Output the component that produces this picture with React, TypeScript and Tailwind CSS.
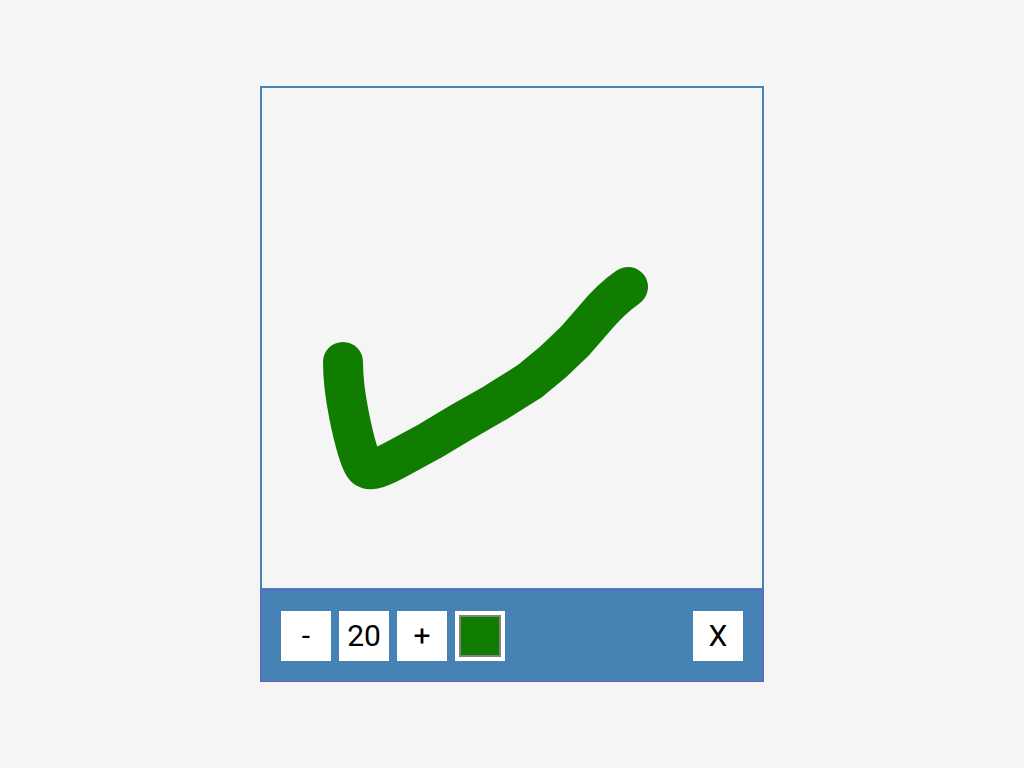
import React from "react";

export default function App() {
  const btn =
    "w-[50px] h-[50px] bg-white flex items-center justify-center text-black text-[30px] leading-none";
  return (
    <div
      className="min-h-screen bg-[#f5f5f5] flex items-center justify-center"
      style={{ fontFamily: "Roboto, 'Liberation Sans', sans-serif" }}
    >
      <div className="flex flex-col w-[504px]">
        <div className="w-[504px] h-[504px] border-2 border-[#4682b4] bg-[#f5f5f5]">
          <svg width="500" height="500" viewBox="262 88 500 500" className="block">
            <path
              d="M343 362 C343 382 345 395 349 415 C354 440 359 458 364 466 C368 472 376 470 395 460 L430 441 L460 423 L495 403 L530 381 L553 362 L575 341 L595 318 C605 306 615 296 628 287"
              fill="none"
              stroke="#107c00"
              strokeWidth="40"
              strokeLinecap="round"
              strokeLinejoin="round"
            />
          </svg>
        </div>
        <div className="w-[504px] bg-[#4682b4] border border-[#6a5acd] p-[20px] flex items-center">
          <div className="flex gap-2">
            <div className={btn}>-</div>
            <div className={btn}>20</div>
            <div className={btn}>+</div>
            <div className="w-[50px] h-[50px] bg-white p-[4px]">
              <div className="w-full h-full bg-[#107c00] border-2 border-[#808080]" />
            </div>
          </div>
          <div className="ml-auto">
            <div className={btn}>X</div>
          </div>
        </div>
      </div>
    </div>
  );
}
